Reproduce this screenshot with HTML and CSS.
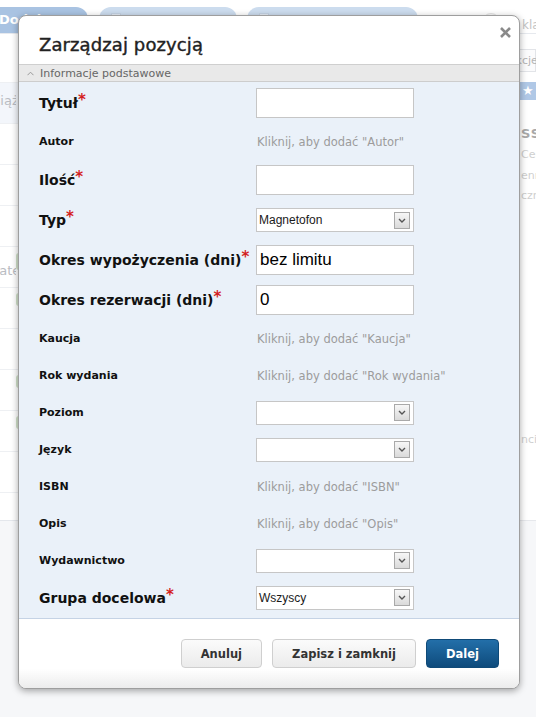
FILE: index.html
```html
<!DOCTYPE html>
<html lang="pl">
<head>
<meta charset="utf-8">
<title>Zarządzaj pozycją</title>
<link rel="stylesheet" href="styles.css">
</head>
<body>
<div class="page">
  <div class="tabs">
    <div class="tab tab-active">Dodaj</div>
    <div class="tab"><span class="tab-ico"></span></div>
    <div class="tab tab-wide"><span class="tab-ico"></span></div>
    <div class="tab-circle"></div>
    <div class="tab-text">klawiatura</div>
  </div>
  <div class="page-body">
    <div class="left-col">
      <div class="lrow"><span class="ltext"></span></div>
      <div class="lrow lrow-hl"><span class="ltext">Książki</span></div>
      <div class="lrow"><span class="ltext"></span></div>
      <div class="lrow"><span class="ltext"></span></div>
      <div class="lrow"><span class="ltext"></span></div>
      <div class="lrow"><span class="ltext ltext-k">Kategorie</span><span class="badge"></span></div>
      <div class="lrow"><span class="ltext"></span><span class="badge badge-top"></span></div>
      <div class="lrow"><span class="ltext"></span></div>
      <div class="lrow"><span class="ltext"></span><span class="badge badge-top"></span></div>
      <div class="lrow"><span class="ltext"></span><span class="badge badge-top"></span></div>
      <div class="lrow"><span class="ltext"></span></div>
      <div class="lrow lrow-last"><span class="ltext"></span></div>
    </div>
    <div class="mid-col"></div>
    <div class="right-col">
      <div class="r-box">Akcje</div>
      <div class="r-bar">★</div>
      <div class="r-title">SSL</div>
      <div class="r-line">Certyfikat</div>
      <div class="r-line">enne</div>
      <div class="r-line">czne</div>
      <div class="r-line r-low">ncie</div>
      <div class="r-end"></div>
    </div>
  </div>
</div>

<div class="modal">
  <div class="modal-header">
    <h1 class="modal-title">Zarządzaj pozycją</h1>
    <svg class="close" width="11" height="11" viewBox="0 0 11 11"><path d="M1 1L10 10M10 1L1 10" stroke="#8a8a8a" stroke-width="2.6" fill="none"/></svg>
  </div>
  <div class="section-head">
    <svg class="chev" width="7" height="5" viewBox="0 0 7 5"><path d="M0.5 4.2L3.5 1.2L6.5 4.2" stroke="#9a9a9a" stroke-width="1" fill="none"/></svg>
    <span>Informacje podstawowe</span>
  </div>
  <div class="form-body">
    <div class="row row-tall">
      <div class="label label-big">Tytuł<span class="req">*</span></div>
      <div class="input"></div>
    </div>
    <div class="row">
      <div class="label">Autor</div>
      <div class="hint">Kliknij, aby dodać "Autor"</div>
    </div>
    <div class="row row-tall">
      <div class="label label-big">Ilość<span class="req">*</span></div>
      <div class="input"></div>
    </div>
    <div class="row row-tall">
      <div class="label label-big">Typ<span class="req">*</span></div>
      <div class="select"><span class="sel-val">Magnetofon</span><span class="sel-btn"><svg width="8" height="5" viewBox="0 0 8 5"><path d="M1 1L4 4L7 1" stroke="#555" stroke-width="1.4" fill="none"/></svg></span></div>
    </div>
    <div class="row row-tall">
      <div class="label label-big">Okres wypożyczenia (dni)<span class="req">*</span></div>
      <div class="input"><span class="in-val">bez limitu</span></div>
    </div>
    <div class="row row-tall">
      <div class="label label-big">Okres rezerwacji (dni)<span class="req">*</span></div>
      <div class="input"><span class="in-val">0</span></div>
    </div>
    <div class="row">
      <div class="label">Kaucja</div>
      <div class="hint">Kliknij, aby dodać "Kaucja"</div>
    </div>
    <div class="row">
      <div class="label">Rok wydania</div>
      <div class="hint">Kliknij, aby dodać "Rok wydania"</div>
    </div>
    <div class="row">
      <div class="label">Poziom</div>
      <div class="select"><span class="sel-val"></span><span class="sel-btn"><svg width="8" height="5" viewBox="0 0 8 5"><path d="M1 1L4 4L7 1" stroke="#555" stroke-width="1.4" fill="none"/></svg></span></div>
    </div>
    <div class="row">
      <div class="label">Język</div>
      <div class="select"><span class="sel-val"></span><span class="sel-btn"><svg width="8" height="5" viewBox="0 0 8 5"><path d="M1 1L4 4L7 1" stroke="#555" stroke-width="1.4" fill="none"/></svg></span></div>
    </div>
    <div class="row">
      <div class="label">ISBN</div>
      <div class="hint">Kliknij, aby dodać "ISBN"</div>
    </div>
    <div class="row">
      <div class="label">Opis</div>
      <div class="hint">Kliknij, aby dodać "Opis"</div>
    </div>
    <div class="row">
      <div class="label">Wydawnictwo</div>
      <div class="select"><span class="sel-val"></span><span class="sel-btn"><svg width="8" height="5" viewBox="0 0 8 5"><path d="M1 1L4 4L7 1" stroke="#555" stroke-width="1.4" fill="none"/></svg></span></div>
    </div>
    <div class="row">
      <div class="label label-big">Grupa docelowa<span class="req">*</span></div>
      <div class="select"><span class="sel-val">Wszyscy</span><span class="sel-btn"><svg width="8" height="5" viewBox="0 0 8 5"><path d="M1 1L4 4L7 1" stroke="#555" stroke-width="1.4" fill="none"/></svg></span></div>
    </div>
  </div>
  <div class="modal-footer">
    <button class="btn">Anuluj</button>
    <button class="btn">Zapisz i zamknij</button>
    <button class="btn btn-primary">Dalej</button>
  </div>
</div>
</body>
</html>
```

FILE: styles.css
```css
* { box-sizing: border-box; }

html, body {
  margin: 0;
  padding: 0;
}

body {
  width: 536px;
  height: 717px;
  overflow: hidden;
  background: #f6f7f9;
  font-family: "DejaVu Sans", "Liberation Sans", sans-serif;
  position: relative;
}

/* ---------- background page ---------- */
.page {
  height: 717px;
  overflow: hidden;
}

.tabs {
  display: flex;
  align-items: flex-end;
  height: 34px;
  background: #fff;
  border-bottom: 1px solid #e6e9ee;
  overflow: hidden;
  white-space: nowrap;
}

.tabs > * { flex: none; }

.tab {
  height: 26px;
  width: 138px;
  margin-right: 10px;
  border-radius: 12px 12px 0 0;
  background: #ccdcee;
  padding: 6px 12px;
}

.tab-active {
  margin-left: -20px;
  width: 108px;
  margin-right: 11px;
  background: #a9c3e2;
  color: #fff;
  font-weight: bold;
  font-size: 13px;
  padding: 5px 0 0 19px;
}

.tab-wide { width: 171px; }

.tab-ico {
  display: block;
  width: 10px;
  height: 10px;
  background: #e3ebf5;
  border: 1px solid #c4d2e3;
}

.tab-circle {
  align-self: flex-start;
  margin-top: 13px;
  margin-left: 54px;
  width: 18px;
  height: 18px;
  border-radius: 50%;
  border: 1px solid #e2e2e2;
  background: #fafafa;
}

.tab-text {
  align-self: flex-start;
  margin-top: 18px;
  margin-left: 22px;
  font-size: 12px;
  color: #c4c4c4;
}

.page-body {
  display: flex;
  height: 487px;
  background: #fff;
}

.left-col {
  width: 60px;
  margin-left: -42px;
  padding-top: 8px;
  flex: none;
}

.lrow {
  display: flex;
  align-items: flex-start;
  height: 41px;
  border-bottom: 1px solid #eef0f3;
  font-size: 13px;
  color: #b9bcc2;
  padding-top: 16px;
  white-space: nowrap;
}

.ltext {
  width: 58px;
  flex: none;
  overflow: hidden;
  padding-left: 27px;
}

.ltext-k { padding-left: 33px; }

.lrow-hl {
  background: #f3f6fb;
  padding-top: 10px;
}

.lrow-last { border-bottom: 1px solid #e4e7ec; height: 28px; }

.badge {
  flex: none;
  width: 8px;
  height: 17px;
  margin-top: -10px;
  border-radius: 3px;
  background: #d2e2cb;
}

.badge-top { margin-top: -11px; height: 13px; }

.mid-col { flex: 1; }

.right-col {
  width: 31px;
  flex: none;
  padding-top: 15px;
  font-size: 11px;
  color: #c9c9c9;
  white-space: nowrap;
  overflow: hidden;
}

.r-box {
  height: 23px;
  border: 1px solid #e2e4e8;
  background: #fbfbfc;
  padding: 4px 0 0 2px;
  color: #b4b4b4;
}

.r-bar {
  margin-top: 10px;
  height: 18px;
  background: #b0c8e6;
  color: #fff;
  font-size: 13px;
  padding-left: 17px;
  line-height: 18px;
}

.r-title {
  margin-top: 26px;
  padding-left: 16px;
  font-size: 13px;
  font-weight: bold;
  color: #a9a9a9;
  letter-spacing: 1px;
}

.r-line {
  padding-left: 16px;
  height: 20.5px;
  line-height: 20.5px;
  color: #cfcfcf;
}

.r-line:nth-of-type(4) { margin-top: 4px; }

.r-low { margin-top: 223px; }

.r-end {
  margin-top: 70px;
  border-bottom: 1px solid #e6e8ec;
}

/* ---------- modal ---------- */
.modal {
  position: absolute;
  left: 18px;
  top: 15px;
  width: 502px;
  border: 1px solid #9e9e9e;
  border-radius: 8px;
  background: #fff;
  box-shadow: 0 2px 7px rgba(0, 0, 0, 0.35);
  overflow: hidden;
}

.modal-header {
  position: relative;
  height: 48px;
  padding: 8px 20px 0 20px;
  display: flex;
  align-items: center;
}

.modal-title {
  margin: 0;
  font-size: 18px;
  font-weight: normal;
  color: #222;
  letter-spacing: 0.1px;
  -webkit-text-stroke: 0.4px #222;
}

.close {
  position: absolute;
  top: 11px;
  right: 8px;
}

.section-head {
  height: 18px;
  border-top: 1px solid #cfcfcf;
  border-bottom: 1px solid #cdcdcd;
  background: #e9e9e9;
  display: flex;
  align-items: center;
  padding-left: 8px;
  font-size: 11px;
  color: #666;
}

.chev { margin-right: 6px; }

.form-body {
  background: #eaf1f9;
  padding: 1px 0 2px 0;
  border-bottom: 1px solid #c5d3e5;
}

.row {
  height: 37px;
  display: flex;
  align-items: center;
  padding-left: 20px;
}

.row-tall { height: 40px; }

.label {
  width: 217px;
  flex: none;
  font-size: 11px;
  font-weight: bold;
  color: #111;
  white-space: nowrap;
}

.label-big { font-size: 14px; }

.req {
  color: #d41f1f;
  font-size: 15px;
  font-weight: bold;
  vertical-align: 3px;
  line-height: 0;
}

.input {
  width: 158px;
  height: 30px;
  border: 1px solid #c6c6c6;
  background: #fff;
  display: flex;
  align-items: center;
  padding-left: 3px;
}

.in-val {
  font-family: "Liberation Sans", Arial, sans-serif;
  font-size: 17px;
  color: #000;
}

.hint {
  padding-left: 1px;
  font-size: 11.5px;
  color: #9c9c9c;
  white-space: nowrap;
}

.select {
  width: 158px;
  height: 24px;
  border: 1px solid #c6c6c6;
  background: #fff;
  display: flex;
  align-items: center;
  justify-content: space-between;
  padding: 0 3px 0 2px;
}

.sel-val {
  font-family: "Liberation Sans", Arial, sans-serif;
  font-size: 12px;
  color: #1a1a1a;
}

.sel-btn {
  width: 16px;
  height: 17px;
  border: 1px solid #a9a9a9;
  background: linear-gradient(#f7f7f7, #dadada);
  display: flex;
  align-items: center;
  justify-content: center;
}

.modal-footer {
  display: flex;
  justify-content: flex-end;
  gap: 10px;
  padding: 20px 20px 20px 20px;
  background: linear-gradient(#fff 0%, #fff 72%, #ececec 100%);
}

.btn {
  height: 29px;
  padding: 0 19px;
  border: 1px solid #cfcfcf;
  border-radius: 4px;
  background: linear-gradient(#fbfbfb, #ebebeb);
  font-family: "DejaVu Sans", sans-serif;
  font-size: 11.5px;
  font-weight: bold;
  color: #333;
  margin: 0;
}

.btn-primary {
  border-color: #0f4a78;
  background: linear-gradient(#236fa9, #0e4b7c);
  color: #fff;
}
```
